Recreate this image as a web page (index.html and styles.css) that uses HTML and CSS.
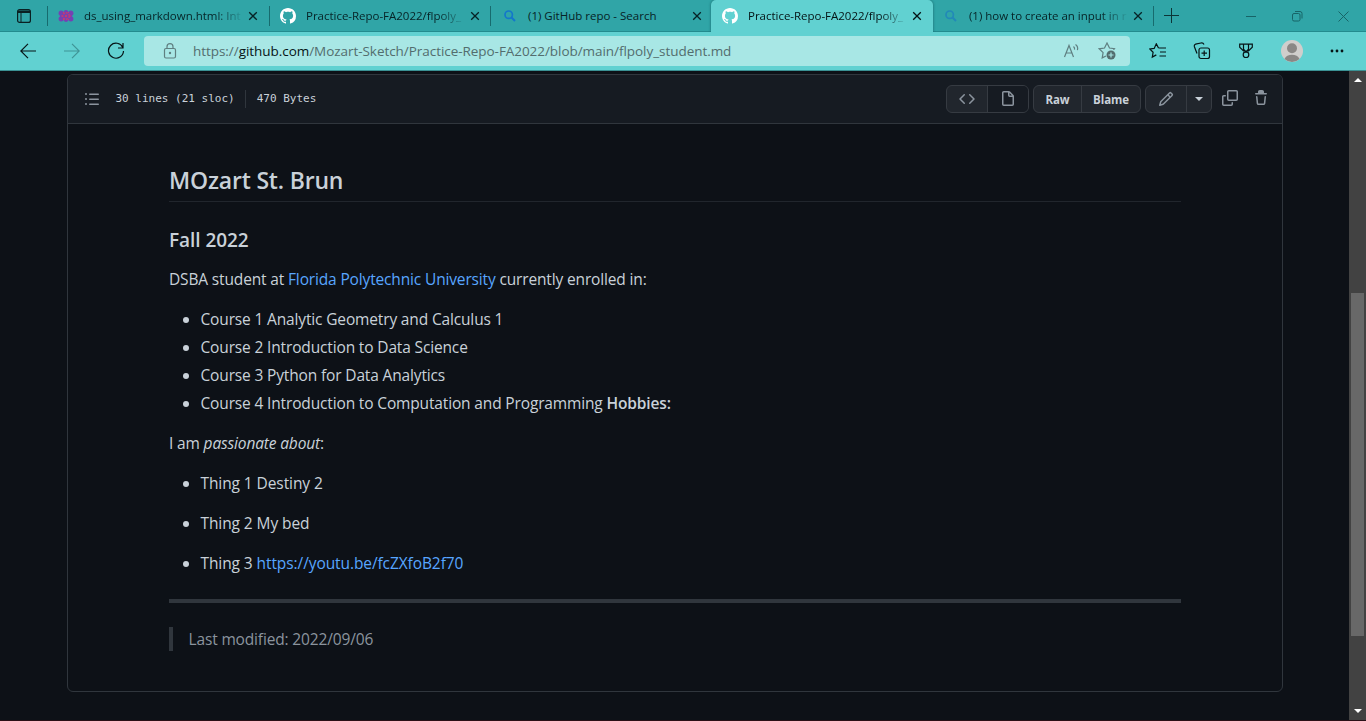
FILE: index.html
```html
<!DOCTYPE html>
<html lang="en">
<head>
<meta charset="utf-8">
<title>Practice-Repo-FA2022/flpoly_student.md</title>
<link rel="stylesheet" href="styles.css">
</head>
<body>
<svg class="defs" aria-hidden="true">
  <symbol id="mark" viewBox="0 0 16 16"><path fill="#fff" d="M8 0C3.58 0 0 3.58 0 8c0 3.54 2.29 6.53 5.47 7.59.4.07.55-.17.55-.38 0-.19-.01-.82-.01-1.49-2.01.37-2.53-.49-2.69-.94-.09-.23-.48-.94-.82-1.13-.28-.15-.68-.52-.01-.53.63-.01 1.08.58 1.23.82.72 1.21 1.87.87 2.33.66.07-.52.28-.87.51-1.07-1.78-.2-3.64-.89-3.64-3.95 0-.87.31-1.59.82-2.15-.08-.2-.36-1.02.08-2.12 0 0 .67-.21 2.2.82.64-.18 1.32-.27 2-.27s1.36.09 2 .27c1.53-1.04 2.2-.82 2.2-.82.44 1.1.16 1.92.08 2.12.51.56.82 1.27.82 2.15 0 3.07-1.87 3.75-3.65 3.95.29.25.54.73.54 1.48 0 1.07-.01 1.93-.01 2.2 0 .21.15.46.55.38A8.01 8.01 0 0 0 16 8c0-4.42-3.58-8-8-8z"/></symbol>
  <symbol id="x" viewBox="0 0 10 10"><path d="M1.200 1.200l7.600 7.600M8.800 1.200L1.200 8.800" fill="none" stroke="currentColor" stroke-width="1.300"/></symbol>
  <symbol id="search" viewBox="0 0 16 16"><circle cx="6.700" cy="6.700" r="3.700" fill="none" stroke="currentColor" stroke-width="1.700"/><path d="M9.500 9.500L13 13" stroke="currentColor" stroke-width="2"/></symbol>
</svg>

<header class="tabstrip">
  <div class="tab-actions"><svg width="16" height="16" viewBox="0 0 16 16"><rect x="1.600" y="1.600" width="12.800" height="12.800" rx="2" fill="none" stroke="#0a2022" stroke-width="1.200"/><path d="M2 2.500h12v2.500H2z" fill="#0a2022"/><path d="M5 5v9" stroke="#0a2022"/></svg></div>
  <div class="tab wide">
    <svg class="favicon" viewBox="0 0 16 16"><g fill="#7441b4"><circle cx="3.200" cy="5.200" r="2.600"/><circle cx="8" cy="4.500" r="2.400"/><circle cx="12.800" cy="5.200" r="2.600"/><circle cx="3.200" cy="10.800" r="2.600"/><circle cx="8" cy="11.500" r="2.400"/><circle cx="12.800" cy="10.800" r="2.600"/><path d="M2 5h12v6H2z"/></g><circle cx="8" cy="8" r="3.300" fill="none" stroke="#c33b74" stroke-width="1.500" stroke-dasharray="2 1"/><circle cx="8" cy="8" r="1.200" fill="#c33b74"/><path d="M3 8h2M11 8h2M5 4l1 1M11 4l-1 1M5 12l1-1M11 12l-1-1" stroke="#c33b74"/></svg>
    <span class="tab-title fade">ds_using_markdown.html: Int</span><svg class="close"><use href="#x"/></svg>
  </div>
  <div class="tab">
    <svg class="favicon"><use href="#mark"/></svg>
    <span class="tab-title fade">Practice-Repo-FA2022/flpoly_</span><svg class="close"><use href="#x"/></svg>
  </div>
  <div class="tab narrow">
    <svg class="favicon blue"><use href="#search"/></svg>
    <span class="tab-title">(1) GitHub repo - Search</span><svg class="close"><use href="#x"/></svg>
  </div>
  <div class="tab active">
    <svg class="favicon"><use href="#mark"/></svg>
    <span class="tab-title fade">Practice-Repo-FA2022/flpoly_</span><svg class="close"><use href="#x"/></svg>
  </div>
  <div class="tab">
    <svg class="favicon blue dim"><use href="#search"/></svg>
    <span class="tab-title fade">(1) how to create an input in r</span><svg class="close"><use href="#x"/></svg>
  </div>
  <svg class="new-tab" width="15" height="15" viewBox="0 0 15 15"><path d="M0 7.500h15M7.500 0v15" stroke="#0c3537"/></svg>
  <div class="window-controls">
    <svg width="11" height="11" viewBox="0 0 11 11"><path d="M0 5.500h10"/></svg>
    <svg width="11" height="11" viewBox="0 0 11 11"><rect x=".5" y="2.500" width="7.500" height="7.500" rx="1.500"/><path d="M3 .5h5a2 2 0 0 1 2 2v5"/></svg>
    <svg width="11" height="11" viewBox="0 0 11 11"><path d="M.5.5l10 10M10.500.5l-10 10"/></svg>
  </div>
</header>

<nav class="toolbar">
  <svg class="nav-back" width="16" height="16" viewBox="0 0 16 16"><path d="M16 8H.8M8 .8L.8 8 8 15.200"/></svg>
  <svg class="nav-fwd" width="16" height="16" viewBox="0 0 16 16"><path d="M0 8h15.200M8 .8L15.200 8 8 15.200"/></svg>
  <svg class="nav-reload" width="18" height="18" viewBox="0 0 18 18"><path d="M15.800 5.500A7.500 7.500 0 1 0 16.500 9M16 1v5h-5"/></svg>
  <div class="address">
    <svg width="14" height="16" viewBox="0 0 14 16"><rect x="1.500" y="5.500" width="11" height="9.500" rx="1.500"/><path d="M4 5.500V3.700a3 3 0 0 1 6 0v1.800"/><circle cx="7" cy="10" r=".6" fill="#4f7272"/></svg>
    <span class="url">https://<b>github.com</b>/Mozart-Sketch/Practice-Repo-FA2022/blob/main/flpoly_student.md</span>
    <svg class="read" width="17" height="16" viewBox="0 0 17 16"><path d="M1.500 14L6 2.500 10.500 14M3 10h6M10.500 3.500c1 .8 1.300 2 1 3.200M12.500 1.500c1.800 1.300 2.500 3.700 1.900 5.700"/></svg>
    <svg class="fav-add" width="18" height="18" viewBox="0 0 18 18"><path d="M15.500 8l1-1.300-5-.7-2.500-5L6.500 6l-5.300.8 3.900 3.800-.9 5.300L8 14"/><circle cx="13" cy="13" r="4.500" fill="#536d6e" stroke="none"/><path d="M13 10.500v5M10.500 13h5" stroke="#a8e7e5"/></svg>
  </div>
  <div class="tools">
    <svg width="18" height="16" viewBox="0 0 18 16"><path d="M9.500 5L7.300.8 5.200 5.400.8 6l3.300 3.300-.8 4.800 4-2.200M9.500 5H17M11 9h6M10.500 13H17"/></svg>
    <svg class="collections" width="18" height="18" viewBox="0 0 18 18"><rect x="6" y="6" width="10.500" height="10.500" rx="2"/><path d="M11.200 8.500v5.500M8.500 11.200H14M4 11.500L1.500 5C1 3.500 1.500 2.600 2.500 2.200L8 1c1.300-.3 2.300 0 3 1.500"/></svg>
    <svg width="16" height="16" viewBox="0 0 16 16"><path d="M1.700 1.200h12.600v3L10.500 8h-5L1.700 4.200zM5.500 1.200v5L8 9l2.500-2.800v-5"/><circle cx="8" cy="11.700" r="2.800"/></svg>
    <svg class="avatar" width="22" height="22" viewBox="0 0 22 22"><circle cx="11" cy="11" r="11" fill="#d0cecc" stroke="none"/><circle cx="11" cy="8.300" r="5" fill="#8a8785" stroke="none"/><path d="M3.500 19c1.300-3 4-4.300 7.500-4.300s6.200 1.300 7.500 4.300a11 11 0 0 1-15 0z" fill="#8a8785" stroke="none"/></svg>
    <svg width="14" height="4" viewBox="0 0 14 4"><g fill="#061416" stroke="none"><circle cx="2" cy="2" r="1.400"/><circle cx="7" cy="2" r="1.400"/><circle cx="12" cy="2" r="1.400"/></g></svg>
  </div>
</nav>

<div class="viewport">
  <main class="page">
    <section class="file">
      <div class="file-head">
        <svg class="toc oct" width="16" height="16" viewBox="0 0 16 16"><path d="M2 4a1 1 0 100-2 1 1 0 000 2zm3.750-1.500a.75.75 0 000 1.500h8.500a.75.75 0 000-1.500h-8.500zm0 5a.75.75 0 000 1.500h8.500a.75.75 0 000-1.500h-8.500zm0 5a.75.75 0 000 1.500h8.500a.75.75 0 000-1.500h-8.500zM3 8a1 1 0 11-2 0 1 1 0 012 0zm-1 6a1 1 0 100-2 1 1 0 000 2z"/></svg>
        <span class="info lines">30 lines (21 sloc)</span><i class="info-sep"></i><span class="info">470 Bytes</span>
        <div class="btns">
          <div class="group view"><span><svg class="oct" width="16" height="16" viewBox="0 0 16 16"><path d="M4.720 3.220a.75.75 0 011.060 1.060L2.060 8l3.720 3.720a.75.75 0 11-1.060 1.060L.47 8.530a.75.75 0 010-1.060l4.250-4.250zm6.560 0a.75.75 0 10-1.060 1.060L13.940 8l-3.720 3.720a.75.75 0 101.060 1.060l4.250-4.250a.75.75 0 000-1.060l-4.250-4.250z"/></svg></span><span class="selected"><svg class="oct" width="16" height="16" viewBox="0 0 16 16"><path d="M3.750 1.500a.25.25 0 00-.25.25v11.500c0 .138.112.25.25.25h8.500a.25.25 0 00.25-.25V6H9.750A1.750 1.750 0 018 4.250V1.500H3.750zm5.750.56v2.190c0 .138.112.25.25.25h2.190L9.500 2.060zM2 1.750C2 .784 2.784 0 3.750 0h5.086c.464 0 .909.184 1.237.513l3.414 3.414c.329.328.513.773.513 1.237v8.086A1.750 1.750 0 0112.250 15h-8.500A1.750 1.750 0 012 13.250V1.750z"/></svg></span></div>
          <div class="group text"><span>Raw</span><span>Blame</span></div>
          <div class="group edit"><span><svg class="oct" width="16" height="16" viewBox="0 0 16 16"><path d="M11.013 1.427a1.750 1.750 0 012.474 0l1.086 1.086a1.750 1.750 0 010 2.474l-8.610 8.610c-.21.21-.47.364-.756.445l-3.251.93a.75.75 0 01-.927-.928l.929-3.250a1.750 1.750 0 01.445-.758l8.610-8.610zm1.414 1.060a.25.25 0 00-.354 0L10.811 3.750l1.439 1.440 1.263-1.263a.25.25 0 000-.354l-1.086-1.086zM11.189 6.250L9.750 4.810l-6.286 6.287a.25.25 0 00-.064.108l-.558 1.953 1.953-.558a.249.249 0 00.108-.064l6.286-6.286z"/></svg></span><span><i class="caret"></i></span></div>
          <svg class="oct copy" width="16" height="16" viewBox="0 0 16 16"><path d="M0 6.750C0 5.784.784 5 1.750 5h1.500a.75.75 0 010 1.500h-1.500a.25.25 0 00-.25.25v7.500c0 .138.112.25.25.25h7.500a.25.25 0 00.25-.25v-1.500a.75.75 0 011.500 0v1.500A1.750 1.750 0 019.250 16h-7.500A1.750 1.750 0 010 14.250v-7.500z"/><path d="M5 1.750C5 .784 5.784 0 6.750 0h7.500C15.216 0 16 .784 16 1.750v7.500A1.750 1.750 0 0114.250 11h-7.500A1.750 1.750 0 015 9.250v-7.500zm1.750-.25a.25.25 0 00-.25.25v7.500c0 .138.112.25.25.25h7.500a.25.25 0 00.25-.25v-7.500a.25.25 0 00-.25-.25h-7.500z"/></svg>
          <svg class="oct trash" width="16" height="16" viewBox="0 0 16 16"><path d="M6.500 1.750a.25.25 0 01.25-.25h2.500a.25.25 0 01.25.25V3h-3V1.750zm4.500 0V3h2.250a.75.75 0 010 1.500H2.750a.75.75 0 010-1.500H5V1.750C5 .784 5.784 0 6.750 0h2.500C10.216 0 11 .784 11 1.750zM4.496 6.675a.75.75 0 10-1.492.15l.66 6.600A1.750 1.750 0 005.405 15h5.190c.9 0 1.652-.681 1.741-1.576l.66-6.600a.75.75 0 00-1.492-.149l-.66 6.600a.25.25 0 01-.249.225h-5.190a.25.25 0 01-.249-.225l-.66-6.600z"/></svg>
        </div>
      </div>
      <article class="markdown">
        <h2>MOzart St. Brun</h2>
        <h3>Fall 2022</h3>
        <p>DSBA student at <a>Florida Polytechnic University</a> currently enrolled in:</p>
        <ul>
          <li>Course 1 Analytic Geometry and Calculus 1</li>
          <li>Course 2 Introduction to Data Science</li>
          <li>Course 3 Python for Data Analytics</li>
          <li>Course 4 Introduction to Computation and Programming <strong>Hobbies:</strong></li>
        </ul>
        <p>I am <em>passionate about</em>:</p>
        <ul class="loose">
          <li>Thing 1 Destiny 2</li>
          <li>Thing 2 My bed</li>
          <li>Thing 3 <a>https://youtu.be/fcZXfoB2f70</a></li>
        </ul>
        <hr>
        <blockquote>Last modified: 2022/09/06</blockquote>
      </article>
    </section>
  </main>
  <aside class="scrollbar"><i class="up"></i><div class="thumb"></div><i class="down"></i></aside>
</div>
</body>
</html>
```
FILE: styles.css
```css
* { box-sizing: border-box; }
body { margin: 0; height: 721px; overflow: hidden; display: flex; flex-direction: column; background: #0d1117; font-family: "Open Sans", "Noto Sans", sans-serif; }
svg { display: block; flex: none; }
.defs { position: absolute; width: 0; height: 0; }

.tabstrip { display: flex; height: 32px; flex: none; background: #30a5a7; align-items: stretch; box-shadow: inset 0 -1px #238b8e; }
.tab-actions { width: 48px; padding: 8px 0 0 16px; position: relative; }
.tab { width: 221px; display: flex; align-items: center; padding: 0 10px; position: relative; color: #062326; }
.tab.wide { width: 222px; }
.tab.narrow { width: 220px; padding-left: 11px; }
.tab:not(.active)::after, .tab-actions::after { content: ""; position: absolute; right: 0; top: 6px; width: 1px; height: 20px; background: #176b6e; }
.tab.narrow::after { display: none; }
.tab.active { width: 222px; padding-left: 11px; background: #61d1d1; border-radius: 5px 5px 0 0; color: #041315; box-shadow: 0 0 3px #17686b; clip-path: inset(0 -3px 0 -3px); }
.favicon { width: 16px; height: 16px; }
.blue { color: #1477cb; }
.dim { color: #2289b8; }
.tab-title { flex: none; width: 158px; margin-left: 10px; font-size: 11.5px; line-height: 16px; white-space: nowrap; }
.fade { letter-spacing: -.02px; -webkit-mask-image: linear-gradient(90deg, #000 132px, transparent 160px); mask-image: linear-gradient(90deg, #000 132px, transparent 160px); }
.close { width: 10px; height: 10px; margin-left: 6px; }
.new-tab { margin: 8px 0 0 10px; }
.window-controls { display: flex; gap: 35px; margin: 11px 0 0 67px; fill: none; stroke: #176467; stroke-width: 1; }

.toolbar { display: flex; height: 39px; flex: none; align-items: center; background: #61d1d1; border-bottom: 1px solid #3a9193; fill: none; stroke: #061416; stroke-width: 1.2; }
.nav-back { margin-left: 20px; }
.nav-fwd { margin-left: 28px; stroke: #3f9496; }
.nav-reload { margin-left: 27px; }
.address { display: flex; align-items: center; width: 986px; height: 30px; margin-left: 19px; padding-left: 19px; border-radius: 4px; background: #a8e7e5; stroke: #5f7f80; }
.url { width: 860px; margin-left: 16px; font-size: 13.5px; line-height: 20px; letter-spacing: -.05px; color: #536d6e; white-space: nowrap; }
.url b { font-weight: 400; color: #061416; }
.read { margin-left: 10px; }
.fav-add { margin-left: 18px; }
.tools { display: flex; align-items: center; margin-left: 19px; gap: 27px; }
.collections { margin-left: -1px; }

.viewport { display: flex; flex: 1; min-height: 0; border-bottom: 1px solid #2a1017; }
.page { flex: 1; padding: 3px 66px 0 67px; }
.file { height: 618px; border: 1px solid #30363d; border-radius: 6px; color: #c9d1d9; }
.file-head { display: flex; align-items: center; height: 49px; padding: 0 13px 0 16px; border-bottom: 1px solid #30363d; border-radius: 5px 5px 0 0; background: #161b22; }
.oct { fill: #8b949e; }
.info { font: 11px/18px "DejaVu Sans Mono", monospace; white-space: pre; }
.lines { margin-left: 15.5px; }
.info-sep { width: 1px; height: 18px; margin: 0 10.5px; background: #30363d; }
.btns { display: flex; align-items: center; margin-left: auto; }
.group { display: flex; height: 28px; border: 1px solid #363b42; border-radius: 6px; background: #21262d; overflow: hidden; font-size: 11.5px; font-weight: 700; letter-spacing: -.1px; }
.group span { display: flex; align-items: center; justify-content: center; }
.group span + span { border-left: 1px solid #363b42; }
.view span { width: 40px; }
.view .selected { width: 41px; background: #161b22; }
.text { margin-left: 4px; }
.text span { width: 47px; }
.text span + span { width: 59px; }
.edit { margin-left: 4px; }
.edit span { width: 40px; }
.edit span + span { width: 25px; }
.caret { border: 4px solid transparent; border-top-color: #c9d1d9; border-bottom: 0; }
.copy { margin: -3px 0 0 10px; }
.trash { margin: -3px 0 0 15px; }

.markdown { padding: 41px 101px 0; font-size: 15.5px; line-height: 24px; letter-spacing: -.15px; }
.markdown h2 { margin: 0 0 26px; padding-bottom: 6px; border-bottom: 1px solid #21262d; font-size: 23px; line-height: 30px; font-weight: 600; letter-spacing: -.18px; }
.markdown h3 { margin: 0 0 14px; font-size: 19px; line-height: 25px; font-weight: 600; letter-spacing: -.05px; }
.markdown p { margin: 0 0 16px; }
.markdown a { color: #58a6ff; }
.markdown ul { margin: 0 0 16px; padding-left: 31.5px; }
.markdown li + li { margin-top: 4px; }
.markdown .loose { margin-bottom: 24px; letter-spacing: -.09px; }
.markdown .loose li + li { margin-top: 16px; }
.markdown hr { height: 4px; margin: 0 0 24px; border: 0; background: #30363d; }
.markdown blockquote { margin: 0; padding-left: 15.5px; border-left: 4px solid #30363d; color: #8b949e; }
.markdown strong { font-weight: 600; }

.scrollbar { display: flex; flex-direction: column; align-items: center; width: 17px; background: #424242; }
.up { margin-top: 7px; border: 4px solid transparent; border-bottom-color: #fff; border-top: 0; }
.thumb { width: 13px; height: 343px; margin-top: 211px; background: #686868; }
.down { margin-top: 73px; border: 4px solid transparent; border-top-color: #fff; border-bottom: 0; }
```
